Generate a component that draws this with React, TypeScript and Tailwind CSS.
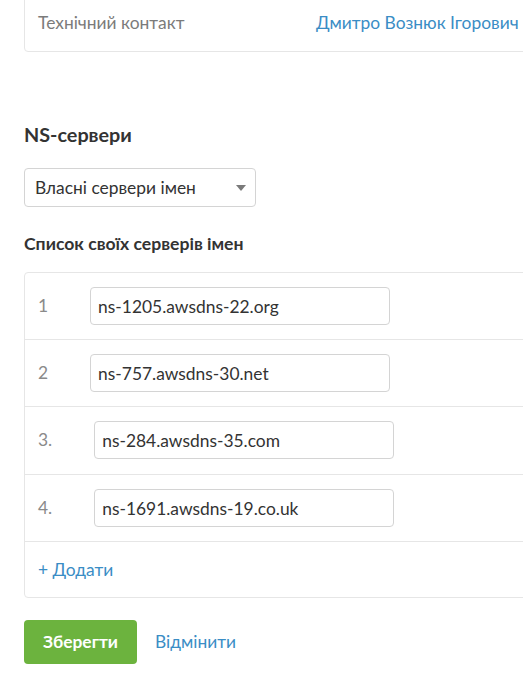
import React from 'react';

const servers = [
  { label: '1', value: 'ns-1205.awsdns-22.org' },
  { label: '2', value: 'ns-757.awsdns-30.net' },
  { label: '3.', value: 'ns-284.awsdns-35.com' },
  { label: '4.', value: 'ns-1691.awsdns-19.co.uk' },
];

function App() {
  return (
    <div className="min-h-screen w-[523px] overflow-hidden bg-white font-['Lato',sans-serif] text-[17.4px] text-[#333]">
      <div className="w-[580px] pl-[24px]">
        {/* Contact card (top cut off) */}
        <div className="-mt-[8px] rounded-[4px] border border-[#e6e6e6] pl-[13px] pr-[14px] pt-[18px] pb-[16px]">
          <div className="flex items-center leading-[24px]">
            <span className="w-[278px] text-[#7b7b7b]">Технічний контакт</span>
            <a className="text-[#3a8dc5]">Дмитро Вознюк Ігорович</a>
          </div>
        </div>

        {/* NS servers */}
        <h2 className="mt-[70px] text-[19.8px] leading-[24px] font-bold text-[#333]">NS-сервери</h2>

        <div className="mt-[22px] flex h-[39px] w-[232px] items-center justify-between rounded-[4px] border border-[#d4d4d4] pl-[10px] pr-[8px]">
          <span className="leading-[24px]">Власні сервери імен</span>
          <svg width="10" height="6" viewBox="0 0 10 6" className="mr-[1px]">
            <path d="M0 0 L10 0 L5 6 Z" fill="#7a7a7a" />
          </svg>
        </div>

        <h3 className="mt-[25px] text-[17.6px] leading-[24px] font-bold text-[#333]">Список своїх серверів імен</h3>

        <div className="mt-[16px] rounded-[4px] border border-[#e6e6e6]">
          {servers.map((s) => (
            <div key={s.label} className="flex items-center border-b border-[#e6e6e6] pl-[13px] pr-[14px] py-[14px] [&:nth-child(3)]:pb-[15px]">
              <span className="leading-[24px] text-[#8a8a8a]">{s.label}</span>
              <input
                readOnly
                value={s.value}
                className="ml-[42px] h-[38px] w-[300px] rounded-[4px] border border-[#d4d4d4] px-[7px] leading-[24px] text-[#333] outline-none"
              />
            </div>
          ))}
          <div className="pl-[13px] pr-[14px] py-[15.5px] leading-[24px]">
            <a className="text-[#3a8dc5]">+ Додати</a>
          </div>
        </div>

        <div className="mt-[22px] flex items-center">
          <button className="h-[44px] w-[113px] rounded-[4px] bg-[#6cb33e] font-bold text-white">Зберегти</button>
          <a className="ml-[18px] text-[#3a8dc5]">Відмінити</a>
        </div>
      </div>
    </div>
  );
}

export default App;
